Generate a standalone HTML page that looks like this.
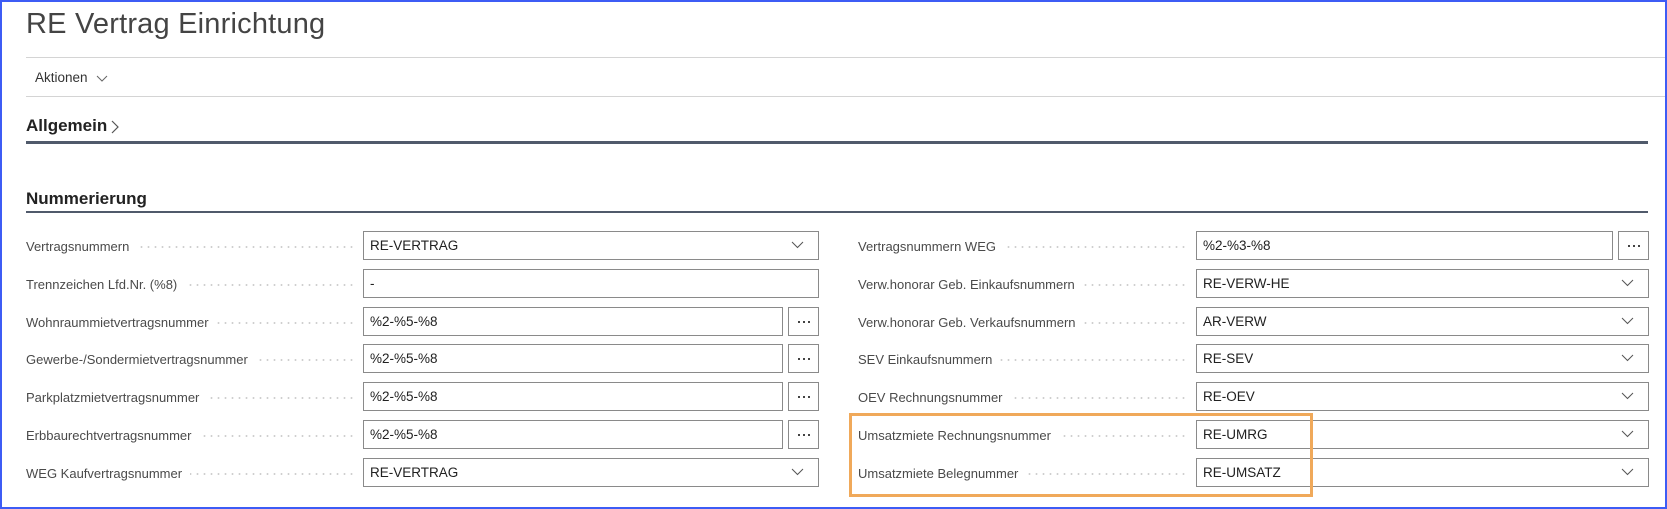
<!DOCTYPE html>
<html><head><meta charset="utf-8"><style>
*{margin:0;padding:0;box-sizing:border-box}
body{width:1667px;height:509px;overflow:hidden;background:#fff;font-family:"Liberation Sans",sans-serif;color:#212121;position:relative}
.frame{position:absolute;left:0;top:0;width:1667px;height:509px;border:2px solid #3d5cf5;pointer-events:none;z-index:5}
.abs{position:absolute}
.title{left:26px;top:8px;font-size:29px;font-weight:normal;color:#444;letter-spacing:0.2px}
.gline{height:1px;background:#d4d4d4;left:26px;width:1641px}
.lbl{font-size:13px;color:#4a4a4a;white-space:nowrap}
.dots{height:2px;background-image:radial-gradient(circle,#cfcfcf 0.9px,transparent 1.1px);background-size:7px 2px}
.inp{height:29px;border:1px solid #8a8a8a;font-size:13.5px;padding:6px 0 0 6px;color:#212121;background:#fff}
.btn{height:29px;width:31px;border:1px solid #8a8a8a;background:#fff}
.btn:after{content:"";position:absolute;left:9px;top:13px;width:2px;height:2px;background:#444;box-shadow:5px 0 #444,10px 0 #444}
.chev{position:absolute;right:14px;top:9px}
</style></head><body>
<div class="frame"></div>
<div class="abs title">RE Vertrag Einrichtung</div>
<div class="abs gline" style="top:57px"></div>
<div class="abs lbl" style="left:35px;top:70px;font-size:13.5px;color:#333">Aktionen</div>
<svg class="abs" style="left:96px;top:75px" width="12" height="8"><path d="M1 1 L6 6 L11 1" fill="none" stroke="#666" stroke-width="1"/></svg>
<div class="abs gline" style="top:96px"></div>
<div class="abs" style="left:26px;top:116px;font-size:17px;font-weight:bold;color:#222">Allgemein</div>
<svg class="abs" style="left:111px;top:120px" width="8" height="14"><path d="M1 1 L7 7 L1 13" fill="none" stroke="#555" stroke-width="1.2"/></svg>
<div class="abs" style="left:26px;top:141px;width:1622px;height:3px;background:#505a6b"></div>
<div class="abs" style="left:26px;top:189px;font-size:17px;font-weight:bold;color:#222">Nummerierung</div>
<div class="abs" style="left:26px;top:211px;width:1622px;height:2px;background:#505a6b"></div>

<div id="rows"></div>
<div class="abs" style="left:849px;top:413px;width:464px;height:84px;border:3px solid #f0a95a;z-index:4"></div>
<script>
const L=[["Vertragsnummern","RE-VERTRAG","d"],["Trennzeichen Lfd.Nr. (%8)","-","p"],["Wohnraummietvertragsnummer","%2-%5-%8","b"],["Gewerbe-/Sondermietvertragsnummer","%2-%5-%8","b"],["Parkplatzmietvertragsnummer","%2-%5-%8","b"],["Erbbaurechtvertragsnummer","%2-%5-%8","b"],["WEG Kaufvertragsnummer","RE-VERTRAG","d"]];
const R=[["Vertragsnummern WEG","%2-%3-%8","b"],["Verw.honorar Geb. Einkaufsnummern","RE-VERW-HE","d"],["Verw.honorar Geb. Verkaufsnummern","AR-VERW","d"],["SEV Einkaufsnummern","RE-SEV","d"],["OEV Rechnungsnummer","RE-OEV","d"],["Umsatzmiete Rechnungsnummer","RE-UMRG","d"],["Umsatzmiete Belegnummer","RE-UMSATZ","d"]];
const chev='<svg class="chev" width="13" height="8"><path d="M1 1 L6.5 6.5 L12 1" fill="none" stroke="#555" stroke-width="1"/></svg>';
let h="";
function row(a,i,lx,ix,ie){
 const t=Math.round(231+37.8*i);
 h+=`<div class="abs lbl" style="left:${lx}px;top:${t+8}px;background:#fff;padding-right:8px;z-index:2">${a[0]}</div>`;
 h+=`<div class="abs dots" style="left:${lx}px;top:${t+15}px;width:${ix-lx-10}px"></div>`;
 if(a[2]=="b"){
  h+=`<div class="abs inp" style="left:${ix}px;top:${t}px;width:${ie-ix-36}px">${a[1]}</div>`;
  h+=`<div class="abs btn" style="left:${ie-31}px;top:${t}px"></div>`;
 }else{
  h+=`<div class="abs inp" style="left:${ix}px;top:${t}px;width:${ie-ix}px">${a[1]}${a[2]=="d"?chev:""}</div>`;
 }
}
L.forEach((a,i)=>row(a,i,26,363,819));
R.forEach((a,i)=>row(a,i,858,1196,1649));
document.getElementById("rows").innerHTML=h;
</script>
</body></html>
